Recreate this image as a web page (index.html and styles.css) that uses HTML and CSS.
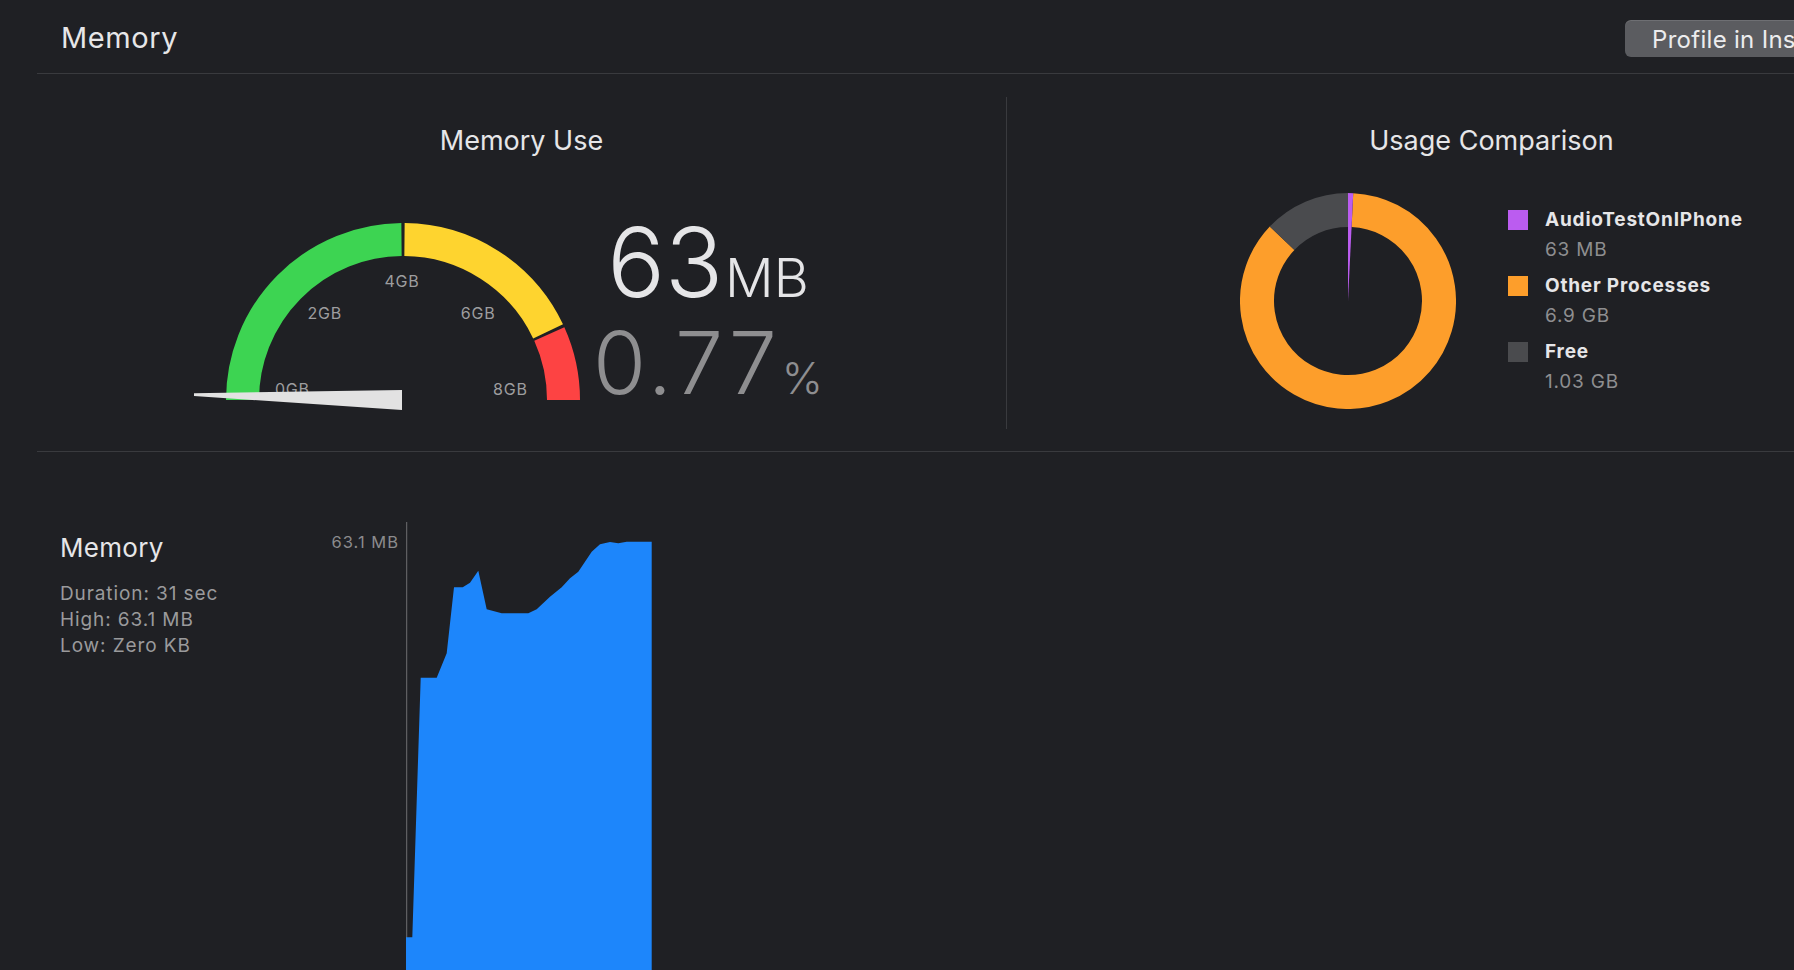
FILE: index.html
```html
<!DOCTYPE html>
<html lang="en">
<head>
<meta charset="utf-8">
<title>Memory</title>
<link rel="stylesheet" href="styles.css">
</head>
<body>
<div class="page">
  <header class="topbar">
    <h1 class="page-title">Memory</h1>
    <button class="profile-btn">Profile in Instruments</button>
  </header>

  <section class="panels">
    <div class="panel panel-use">
      <h2 class="panel-title">Memory Use</h2>
      <div class="gauge-row">
        <svg class="gauge" width="400" height="200" viewBox="0 0 400 200">
          <path class="arc arc-green" d="M 54.5 188 A 160.5 160.5 0 0 1 213.5 27.51"/>
          <path class="arc arc-yellow" d="M 216.5 27.51 A 160.5 160.5 0 0 1 360.08 119.32"/>
          <path class="arc arc-red" d="M 361.31 122.02 A 160.5 160.5 0 0 1 375.5 188"/>
          <text class="gauge-label" x="104.4" y="183">0GB</text>
          <text class="gauge-label" x="136.8" y="107.3">2GB</text>
          <text class="gauge-label" x="214" y="75.3">4GB</text>
          <text class="gauge-label" x="290.2" y="107.3">6GB</text>
          <text class="gauge-label" x="322.4" y="183">8GB</text>
          <polygon class="needle" points="6,181.3 214,178 214,198 6,184"/>
        </svg>
        <div class="readout">
          <div class="readout-size">63<span class="unit-mb">MB</span></div>
          <div class="readout-pct">0.77<span class="unit-pct">%</span></div>
        </div>
      </div>
    </div>

    <div class="panel panel-compare">
      <h2 class="panel-title">Usage Comparison</h2>
      <div class="compare-row">
        <svg class="donut" width="216" height="216" viewBox="0 0 216 216">
          <path class="ring ring-other" d="M 112.40 17.11 A 91 91 0 1 1 42.10 45.25"/>
          <path class="ring ring-free" d="M 42.10 45.25 A 91 91 0 0 1 108 17"/>
          <path class="wedge-app" d="M 108 108 L 108 0 A 108 108 0 0 1 113.22 0.13 Z"/>
        </svg>
        <ul class="legend">
          <li class="legend-item">
            <span class="swatch swatch-app"></span>
            <div class="legend-text">
              <div class="legend-name">AudioTestOnIPhone</div>
              <div class="legend-value">63 MB</div>
            </div>
          </li>
          <li class="legend-item">
            <span class="swatch swatch-other"></span>
            <div class="legend-text">
              <div class="legend-name">Other Processes</div>
              <div class="legend-value">6.9 GB</div>
            </div>
          </li>
          <li class="legend-item">
            <span class="swatch swatch-free"></span>
            <div class="legend-text">
              <div class="legend-name">Free</div>
              <div class="legend-value">1.03 GB</div>
            </div>
          </li>
        </ul>
      </div>
    </div>
  </section>

  <section class="track">
    <div class="track-info">
      <h3 class="track-title">Memory</h3>
      <div class="track-stats">
        <div>Duration: 31 sec</div>
        <div>High: 63.1 MB</div>
        <div>Low: Zero KB</div>
      </div>
    </div>
    <div class="axis-label">63.1 MB</div>
    <div class="chart">
      <svg class="chart-svg" width="250" height="460" viewBox="0 0 250 460">
        <line class="axis" x1="0.5" y1="0" x2="0.5" y2="460"/>
        <path class="area" d="M 0 460 L 0 415.3 L 6.3 415.3 L 14.7 155.7 L 30.7 155.7 L 40.7 131.3 L 48 65.3 L 56.7 65.3 L 64 60.7 L 72.3 48.7 L 80.7 87.3 L 95.7 91.3 L 122.3 91.3 L 130.7 87.3 L 144 74.7 L 155.7 65.3 L 164 56.3 L 172.3 49.7 L 185.7 29.7 L 194 22.3 L 204 20 L 212.3 21.3 L 220.7 19.7 L 245.7 19.7 L 245.7 460 Z"/>
      </svg>
    </div>
  </section>
</div>
</body>
</html>
```

FILE: styles.css
```css
* {
  box-sizing: border-box;
  margin: 0;
  padding: 0;
}

html,
body {
  background: #1f2024;
  overflow: hidden;
}

body {
  width: 1794px;
  height: 970px;
  font-family: Inter, "Noto Sans", "Liberation Sans", sans-serif;
  color: #e5e5e7;
}

.page {
  width: 1980px;
  padding-left: 37px;
}

/* Top bar */
.topbar {
  display: flex;
  align-items: center;
  height: 74px;
  padding-top: 2px;
  padding-left: 24px;
  border-bottom: 1px solid #393a3e;
}

.page-title {
  flex: 0 0 1564px;
  font-size: 29px;
  font-weight: 400;
  letter-spacing: 0.6px;
  color: #e6e6e8;
}

.profile-btn {
  height: 37px;
  margin-top: 1px;
  padding: 2px 27px 0;
  border: none;
  border-radius: 6px;
  background: #5b5c60;
  box-shadow: inset 0 1px 0 rgba(255, 255, 255, 0.12);
  color: #ececee;
  font-family: Inter, "Noto Sans", sans-serif;
  font-size: 24px;
  font-weight: 400;
  letter-spacing: 0.3px;
  white-space: nowrap;
}

/* Panels */
.panels {
  display: flex;
  padding: 23px 0 22px;
  border-bottom: 1px solid #393a3e;
}

.panel {
  flex: 0 0 969px;
  height: 332px;
  padding-top: 27px;
}

.panel-use {
  flex-basis: 970px;
  border-right: 1px solid #393a3e;
}

.panel-title {
  font-size: 27px;
  font-weight: 400;
  line-height: 34px;
  text-align: center;
  color: #e6e6e8;
}

/* Gauge */
.gauge-row {
  display: flex;
  align-items: flex-start;
  margin-top: 54px;
  padding-left: 151px;
}

.gauge {
  display: block;
  flex: 0 0 400px;
}

.arc {
  fill: none;
  stroke-width: 33;
}

.arc-green { stroke: #3dd452; }
.arc-yellow { stroke: #fed42f; }
.arc-red { stroke: #fd4343; }

.gauge-label {
  font-family: Inter, "Noto Sans", sans-serif;
  font-size: 16px;
  letter-spacing: 0.8px;
  fill: #9d9d9f;
  text-anchor: middle;
}

.needle {
  fill: #e2e2e2;
}

.readout {
  flex: 0 0 240px;
  text-align: center;
  white-space: nowrap;
}

.readout-size {
  font-size: 96px;
  font-weight: 300;
  line-height: 100px;
  color: #e5e5e7;
}

.unit-mb {
  margin-left: 2px;
  font-size: 54px;
  line-height: 1;
}

.readout-pct {
  font-size: 86px;
  font-weight: 300;
  line-height: 103px;
  letter-spacing: 4px;
  color: #8e8e90;
}

.unit-pct {
  margin-left: 1px;
  font-size: 44px;
  line-height: 1;
  letter-spacing: 0;
}

/* Donut */
.compare-row {
  display: flex;
  align-items: flex-start;
  margin-top: 35px;
  padding-left: 233px;
}

.donut {
  display: block;
  flex: 0 0 216px;
}

.ring {
  fill: none;
  stroke-width: 34;
}

.ring-other { stroke: #fd9e2b; }
.ring-free { stroke: #4a4b4e; }
.wedge-app { fill: #bb5cf0; }

.legend {
  list-style: none;
  margin-top: 12px;
  margin-left: 52px;
}

.legend-item {
  display: flex;
  gap: 17px;
  margin-bottom: 6px;
}

.swatch {
  flex: 0 0 20px;
  height: 20px;
  margin-top: 5px;
}

.swatch-app { background: #bb5cf0; }
.swatch-other { background: #fd9e2b; }
.swatch-free { background: #4a4b4e; }

.legend-name {
  font-size: 19px;
  font-weight: 700;
  line-height: 30px;
  letter-spacing: 0.8px;
  color: #e6e6e8;
  white-space: nowrap;
}

.legend-value {
  font-size: 19px;
  font-weight: 400;
  line-height: 30px;
  letter-spacing: 0.8px;
  color: #8e8e90;
}

/* Track */
.track {
  display: flex;
  align-items: flex-start;
}

.track-info {
  flex: 0 0 260px;
  padding: 80px 0 0 23px;
}

.track-title {
  font-size: 26px;
  font-weight: 400;
  line-height: 31px;
  letter-spacing: 0.3px;
  color: #e6e6e8;
}

.track-stats {
  margin-top: 18px;
  font-size: 19px;
  line-height: 26px;
  letter-spacing: 0.9px;
  color: #9a9a9c;
}

.axis-label {
  flex: 0 0 109px;
  padding: 80px 7px 0 0;
  text-align: right;
  font-size: 16.5px;
  line-height: 20px;
  letter-spacing: 1px;
  color: #8b8b8d;
  white-space: nowrap;
}

.chart {
  flex: 0 0 260px;
  padding-top: 70px;
}

.chart-svg {
  display: block;
}

.axis {
  stroke: #5e5e61;
  stroke-width: 1.5;
}

.area {
  fill: #1d86fb;
}
```
